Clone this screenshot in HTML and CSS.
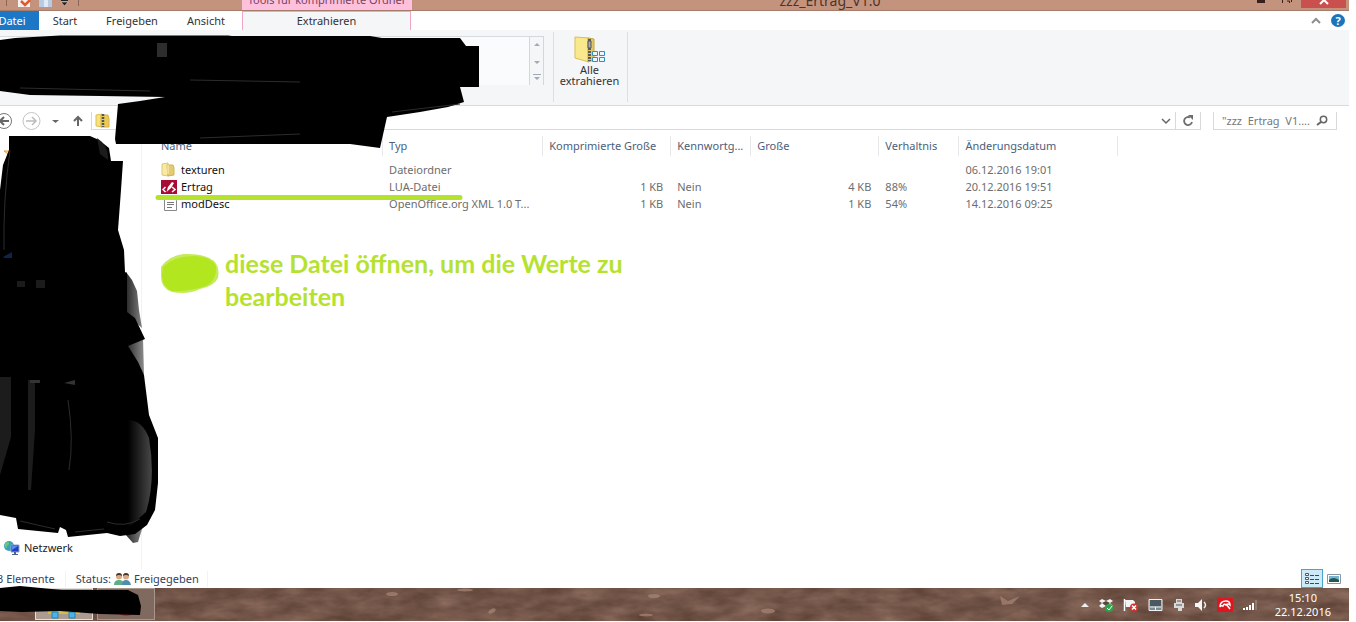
FILE: index.html
```html
<!DOCTYPE html>
<html lang="de">
<head>
<meta charset="utf-8">
<title>zzz_Ertrag_V1.0</title>
<link rel="stylesheet" href="styles.css">
</head>
<body>
<header class="titlebar">
  <div class="quick">
    <svg width="82" height="8" viewBox="0 0 82 8" aria-hidden="true">
      <path d="M6.500 0v6M78.500 0v6" stroke="#8c6656"/>
      <path d="M18 0h12v7H18z" fill="#f6f1ee"/><path d="M21 1l4 4 5-5" stroke="#e0592f" stroke-width="2.500" fill="none"/>
      <path d="M39 0h13v7H39z" fill="#b9cbe3"/><path d="M44 0h4v7h-4z" fill="#dfeaf7"/>
      <path d="M61 0h7v1h-7z" fill="#222"/><path d="M61 2h7l-3.500 4z" fill="#222" stroke="#f0dcd2" stroke-width=".5"/>
    </svg>
  </div>
  <div class="context-title"><span>Tools für komprimierte Ordner</span></div>
  <h1 class="window-title">zzz_Ertrag_V1.0</h1>
  <div class="window-buttons">
    <button class="win" aria-label="Minimieren"><svg width="10" height="8"><path d="M1 0h8v3H1z" fill="#33211a"/></svg></button>
    <button class="win" aria-label="Wiederherstellen"><svg width="12" height="8"><path d="M1.500 3V0M8.500 3V1H6M10.500 2V0" stroke="#33211a" fill="none"/></svg></button>
    <button class="win close" aria-label="Schließen"><svg width="10" height="8"><path d="M1 4l4-4 4 4" stroke="#fff" stroke-width="2" fill="none"/></svg></button>
  </div>
</header>

<nav class="tabs">
  <button class="tab file">Datei</button>
  <button class="tab start">Start</button>
  <button class="tab share">Freigeben</button>
  <button class="tab view">Ansicht</button>
  <button class="tab active">Extrahieren</button>
  <div class="tab-tools">
    <svg width="10" height="8" aria-hidden="true"><path d="M1 6l4-4 4 4" stroke="#8d8d8d" stroke-width="2" fill="none"/></svg>
    <button class="help" aria-label="Hilfe">?</button>
  </div>
</nav>

<section class="ribbon">
  <div class="group gallery-group">
    <div class="gallery"></div>
    <div class="gallery-scroll">
      <svg width="14" height="48" viewBox="0 0 14 48" fill="#a3a9b5" aria-hidden="true"><path d="M4 9h6L7 6zM4 24h6l-3 3zM3 37h8v1H3zM4 40h6l-3 3z"/></svg>
    </div>
  </div>
  <button class="group extract">
    <svg width="32" height="28" viewBox="0 0 32 28" aria-hidden="true">
      <path d="M1 1l14 1v24L1 22z" fill="#fae88d" stroke="#d9bd55"/>
      <path d="M14 2l6 1v21l-6 2z" fill="#e3c868" stroke="#c6a741"/>
      <path d="M15.500 3v22" stroke="#5c5c55" stroke-width="3" stroke-dasharray="2 1"/>
      <path d="M14 5h3v7h-3z" fill="#aaa" stroke="#555"/>
      <path d="M18.500 15.500h5v4h-5zM25.500 15.500h5v4h-5zM18.500 21.500h5v4h-5zM25.500 21.500h5v4h-5z" fill="#eaf8fd" stroke="#2e8fc4"/>
    </svg>
    <span>Alle<br>extrahieren</span>
  </button>
</section>

<div class="addressbar">
  <div class="nav-icons">
    <svg width="91" height="18" viewBox="0 0 91 18" fill="none" aria-hidden="true">
      <circle cx="4" cy="9" r="7.500" stroke="#777"/><path d="M9 9H1M4 5L0 9l4 4" stroke="#666" stroke-width="2"/>
      <circle cx="31.500" cy="9" r="8.500" stroke="#c4c4c4"/><path d="M26 9h10M32 5l4 4-4 4" stroke="#bbb" stroke-width="1.500"/>
      <path d="M52 8h7l-3.500 3z" fill="#666"/>
      <path d="M78 14V5M74 9l4-4 4 4" stroke="#666" stroke-width="2"/>
    </svg>
  </div>
  <div class="path">
    <svg width="16" height="16" viewBox="0 0 16 16" aria-hidden="true"><path d="M1 2l6-1v13l-6-1z" fill="#f7e27b" stroke="#dcc05a"/><path d="M6 2h7l1 4v8H6z" fill="#eccb55" stroke="#d5b14a"/><path d="M8 1v13" stroke="#555" stroke-width="2.500" stroke-dasharray="2 1"/></svg>
    <svg class="chevron" width="10" height="8" aria-hidden="true"><path d="M1 2l4 4 4-4" stroke="#666" stroke-width="1.500" fill="none"/></svg>
  </div>
  <button class="refresh" aria-label="Aktualisieren"><svg width="12" height="12" viewBox="0 0 12 12"><path d="M8 2.500A4 4 0 1 0 10 7" stroke="#6d6d6d" stroke-width="1.800" fill="none"/><path d="M6 0h5v5z" fill="#6d6d6d"/></svg></button>
  <label class="search">
    <input type="text" aria-label="Suchen" placeholder="&quot;zzz  Ertrag  V1....">
    <svg width="12" height="12" viewBox="0 0 12 12" aria-hidden="true"><circle cx="7.500" cy="4.500" r="3.200" stroke="#666" stroke-width="1.500" fill="none"/><path d="M5 7l-4 3" stroke="#666" stroke-width="2"/></svg>
  </label>
</div>

<div class="content">
  <aside class="sidebar">
    <svg class="star" width="16" height="16" viewBox="0 0 16 16" aria-hidden="true"><path d="M8 1l2 5h5l-4 3 2 6-5-4-5 4 2-6-4-3h5z" fill="#fde2a5" stroke="#e99c3c"/></svg>
    <a class="network" href="#">
      <svg width="17" height="14" viewBox="0 0 17 14" aria-hidden="true"><circle cx="6" cy="5" r="5" fill="#3ba0c4"/><path d="M2 3c2-3 5-2 4 0s-3 1-2 4c-2 0-3-2-2-4z" fill="#6ccb62"/><path d="M8 4h8v7H8z" fill="#1d3fc0" stroke="#8fa4c8"/><path d="M9 5l6 0-6 4z" fill="#5b8bf0"/><path d="M11 11h2v2h2v1H9v-1h2z" fill="#52628a"/></svg>
      Netzwerk
    </a>
  </aside>
  <main class="files">
    <table>
      <colgroup><col class="c-name"><col class="c-type"><col class="c-wide"><col class="c-slim"><col class="c-wide"><col class="c-slim"><col class="c-date"></colgroup>
      <thead>
        <tr><th><span>Name</span></th><th><span>Typ</span></th><th><span>Komprimierte Große</span></th><th><span>Kennwortg...</span></th><th><span>Große</span></th><th><span>Verhaltnis</span></th><th><span>Änderungsdatum</span></th></tr>
      </thead>
      <tbody>
        <tr><td class="name"><div>
          <svg width="16" height="15" viewBox="0 0 16 15" aria-hidden="true"><path d="M1 2l6-1v13l-6-1z" fill="#f9eaa0" stroke="#dcc77a"/><path d="M6 3h6l1 3v7l-6 1z" fill="#e5cb70" stroke="#cdb35c"/><path d="M7 3v9" stroke="#fff6cf"/></svg>
          texturen</div></td><td>Dateiordner</td><td></td><td></td><td></td><td></td><td>06.12.2016 19:01</td></tr>
        <tr><td class="name"><div>
          <svg width="16" height="14" viewBox="0 0 16 14" aria-hidden="true"><path d="M0 0h16v14H0z" fill="#a80c34"/><path d="M4.500 7L2 9.500 4.500 12M11 7l3 2.500L11 12" stroke="#fff" stroke-width="1.500" fill="none"/><path d="M5.500 12L7 7l4-5 2 1-3 5z" fill="#fff"/></svg>
          Ertrag</div></td><td>LUA-Datei</td><td class="num">1 KB</td><td>Nein</td><td class="num">4 KB</td><td>88%</td><td>20.12.2016 19:51</td></tr>
        <tr><td class="name"><div>
          <svg width="16" height="14" viewBox="0 0 16 14" aria-hidden="true"><path d="M3.500.5h9l3 3v10h-12z" fill="#fff" stroke="#888"/><path d="M6 5.500h7M6 7.500h7M6 10.500h5" stroke="#777"/></svg>
          modDesc</div></td><td>OpenOffice.org XML 1.0 T...</td><td class="num">1 KB</td><td>Nein</td><td class="num">1 KB</td><td>54%</td><td>14.12.2016 09:25</td></tr>
      </tbody>
    </table>
    <div class="note">
      <svg width="60" height="42" viewBox="0 0 60 42" aria-hidden="true">
        <path d="M1 14Q8 3 24 1Q44 0 54 8Q60 14 58 25Q54 33 40 36Q28 42 12 39Q1 35 1 24z" fill="#c5ea5c"/>
        <path d="M3 14Q14 3 34 3Q50 3 56 13Q57 27 46 33Q28 39 12 38Q2 34 2 22z" fill="#b2e61f"/>
      </svg>
      <p>diese Datei öffnen, um die Werte zu bearbeiten</p>
    </div>
  </main>
</div>

<footer class="status">
  <span class="count">3 Elemente</span>
  <span class="state">Status:
    <svg width="17" height="12" viewBox="0 0 17 12" aria-hidden="true"><circle cx="5" cy="3.500" r="3" fill="#d9aa83"/><path d="M2 3q0-3 3-3t3 3q-3-2-6 0z" fill="#4a3525"/><path d="M0 12q0-5 5-5t5 5z" fill="#5fae8a"/><circle cx="12" cy="3.500" r="3" fill="#d9aa83"/><path d="M9 3q0-3 3-3t3 3q-3-2-6 0z" fill="#4a3525"/><path d="M8 12q0-5 4-5t5 5z" fill="#4f8fae"/></svg>
    Freigegeben</span>
  <div class="views">
    <button class="view-btn on" aria-label="Details"><svg width="16" height="12" viewBox="0 0 16 12"><path d="M1.500.5h3v2h-3zM1.500 4.500h3v2h-3zM1.500 8.500h3v2h-3z" fill="#fff" stroke="#556"/><path d="M6 2.500h4M11 2.500h4M6 6.500h4M11 6.500h4M6 10.500h4M11 10.500h4" stroke="#445"/></svg></button>
    <button class="view-btn" aria-label="Große Symbole"><svg width="14" height="10" viewBox="0 0 14 10"><path d="M.5.5h13v9H.5z" fill="#fff" stroke="#8a98a5"/><path d="M2 2h10v6H2z" fill="#75b6d6"/><path d="M2 6q4-4 10 0v2H2z" fill="#26564f"/></svg></button>
  </div>
</footer>

<div class="taskbar">
  <svg class="ground" aria-hidden="true">
    <filter id="grain" x="0" y="0" width="100%" height="100%" color-interpolation-filters="sRGB">
      <feTurbulence type="fractalNoise" baseFrequency=".03 .08" numOctaves="4" seed="8"/>
      <feColorMatrix values=".24 0 0 0 .33  .22 0 0 0 .225  .21 0 0 0 .18  0 0 0 0 1"/>
    </filter>
    <rect width="100%" height="100%" filter="url(#grain)"/>
    <g fill="#a58373" opacity=".75"><ellipse cx="392" cy="6" rx="6" ry="2"/><ellipse cx="654" cy="8" rx="6" ry="2"/><ellipse cx="768" cy="23" rx="7" ry="2.500"/><ellipse cx="646" cy="27" rx="7" ry="1.500"/><ellipse cx="492" cy="23" rx="4" ry="2" transform="rotate(-30 492 23)"/><path d="M1000 8l8 5 12-5-8 8-10 1z"/><ellipse cx="465" cy="2" rx="8" ry="1.500"/></g>
  </svg>
  <div class="tasks"><button class="task focus" aria-label="Explorer"><svg width="32" height="9"><path d="M0 0h32v4H0z" fill="#d8b943"/><path d="M4 2h6v6H4zM21 2h6v6h-6z" fill="#4bb4e4" stroke="#2583b4"/></svg></button><button class="task" aria-label="Programm"><svg width="20" height="9"><ellipse cx="10" cy="1" rx="9" ry="5" fill="#b32b25"/></svg></button></div>
  <div class="tray">
    <svg width="8" height="14" viewBox="0 0 8 14"><path d="M0 9h8L4 5z" fill="#eee"/></svg>
    <svg width="16" height="14" viewBox="0 0 16 14"><path d="M1 3l3-2 4 2 4-2 3 2-3 2 3 3-3 2-4-2-4 2-3-2 3-3z" fill="#f2f2f2"/><path d="M4 5l4-2 4 2-4 3z" fill="#5c443a"/><circle cx="11" cy="10" r="4" fill="#2ea34a"/><path d="M9 10l2 2 3-4" stroke="#fff" fill="none"/></svg>
    <svg width="16" height="14" viewBox="0 0 16 14"><path d="M1.500 1v12" stroke="#fff" stroke-width="1.500"/><path d="M2 2h8l2 2v5H3z" fill="#f4f4f4"/><circle cx="11" cy="9.500" r="4" fill="#d3342e"/><path d="M9 7.500l4 4M13 7.500l-4 4" stroke="#fff" stroke-width="1.500"/></svg>
    <svg width="16" height="14" viewBox="0 0 16 14"><path d="M1 1.500h13v11H1z" fill="#7d8a92" stroke="#f0f0f0"/><path d="M2 9h11M7.500 9v3" stroke="#f0f0f0"/><path d="M2 2h11v6H2z" fill="#4b5961"/></svg>
    <svg width="12" height="14" viewBox="0 0 12 14"><path d="M3 1h6v4H3zM1 5h10v5H9v3H5v-3H1z" fill="#d9d9d9"/><path d="M4 3h4M3 7h6" stroke="#555"/></svg>
    <svg width="14" height="14" viewBox="0 0 14 14"><path d="M1 5h3l4-4v12L4 9H1z" fill="#f5f5f5"/><path d="M10 4q3 3 0 6" stroke="#eee" stroke-width="1.500" fill="none"/></svg>
    <svg width="16" height="14" viewBox="0 0 16 14"><path d="M0 0h16v14H0z" fill="#dd1620"/><path d="M3 9Q3 3 9 3q4 0 4 4-2-2-4 0-2-2-3 1-2-1-3 1zM9 6l4 5" fill="none" stroke="#fff" stroke-width="1.500"/></svg>
    <svg width="16" height="14" viewBox="0 0 16 14"><path d="M1 10h2v2H1zM4 9h2v3H4zM7 7h2v5H7zM10 5h2v7h-2z" fill="#fff"/><path d="M14 2v10" stroke="#a99a92"/></svg>
    <time class="clock">15:10<br>22.12.2016</time>
  </div>
</div>

<svg class="ink" width="700" height="622" viewBox="0 0 700 622" aria-hidden="true">
  <defs>
    <linearGradient id="fade"><stop offset="0" stop-color="#222"/><stop offset="1" stop-color="#8c8c8c"/></linearGradient>
    <linearGradient id="sheen"><stop offset="0" stop-color="#000"/><stop offset="1" stop-color="#484848"/></linearGradient>
  </defs>
  <path d="M126 272L132 280 137 291 139 310 142 328 126 314zM128 345L143 338 144 375 126 355zM125 534L143 526 138 542 133 543z" fill="url(#fade)"/>
  <path d="M0 40L15 38 60 35.500H228L232 36H370L382 38H460L466 46H479V87H460L464 102 448 107 420 112 387 117 380 148 350 144H116L115 139 118 104 140 101 165 97 100 96 30 95 0 91z"/>
  <path d="M9 136L90 136 99 140 109 148 111 161H123L121 190 118 230 124 250 125 272 127 273V312L135 318 145 339 128 346 138 362 144 375 149 415 158 438V483L155 510 147 525 135 534 120 536 107 533 68 537 66 530 60 527 58 533 18 529 16 518 0 515V190L3 165 9 150z"/>
  <path d="M0 588L20 586 62 590 128 590 138 595 141 606 140 615 100 614 60 611 22 612 0 611z"/>
  <path d="M128 420Q142 420 149 438 156 480 146 512L128 528z" fill="url(#sheen)"/>
  <path d="M0 377h11v60L0 475zM28 380h7v50l-4 60h-3zM97 138q12 8 11 22l-8-6z" fill="#1c1c1c"/>
  <path d="M30 380h10v3H30zM64 383l11-3v5z" fill="#333"/>
  <g fill="none" stroke="#2c2c2c">
    <path d="M68 400Q74 440 69 470M10 150Q3 200 4 250"/>
    <path d="M107 522Q125 528 140 519M75 532L104 529M20 521L55 529"/>
    <path d="M20 88L150 91M190 80L300 82M200 138L300 134M392 112L460 104"/>
  </g>
  <path d="M157 43h10v14h-10z" fill="#2d2d2d"/>
  <path d="M3 257L12 252V258H4z" fill="#102348"/><path d="M36 280h9v8H36zM17 281h8v6h-8z" fill="#1b1b1b"/>
  <path d="M158 197.500H460" stroke="#b5e22f" stroke-width="5" stroke-linecap="round"/>
</svg>
</body>
</html>
```

FILE: styles.css
```css
* { box-sizing: border-box; }
body {
  margin: 0;
  padding: 0 7px 1px 0;
  height: 100vh;
  display: flex;
  flex-direction: column;
  position: relative;
  overflow: hidden;
  background: #fff;
  color: #222;
  font: 11px/16px "Noto Sans", "Open Sans", sans-serif;
}
button { font: inherit; color: inherit; border: 0; padding: 0; background: none; }
svg { display: block; flex: none; }

.titlebar {
  flex: 0 0 11px;
  display: flex;
  align-items: flex-start;
  background: #c4937e;
  border-bottom: 1px solid #a37c6b;
  overflow: hidden;
}
.quick { flex: 0 0 242px; }
.context-title {
  flex: 0 0 170px;
  height: 11px;
  background: #ffc0dd;
  color: #74455c;
  display: flex;
  align-items: flex-end;
  justify-content: center;
  padding-bottom: 3px;
  white-space: nowrap;
}
.window-title {
  flex: 1;
  height: 11px;
  margin: 0;
  display: flex;
  align-items: flex-end;
  justify-content: center;
  color: #4a332a;
  font-weight: 400;
  font-size: 14px;
  line-height: 20px;
}
.window-buttons { display: flex; }
.win { width: 26px; height: 8px; display: flex; justify-content: center; }
.close { width: 45px; margin: 0 3px 0 1px; background: #c9504f; }

.tabs { flex: 0 0 19px; display: flex; background: #fff; color: #333; }
.tab { flex: none; display: flex; align-items: center; justify-content: center; }
.file { width: 39px; padding-right: 15px; background: #1c78c6; color: #fff; }
.start { width: 52px; }
.share { width: 82px; }
.view { width: 66px; }
.active { width: 169px; margin-left: 3px; background: #f5f6f8; border: solid #f0a5c6; border-width: 1px 1px 0; }
.tab-tools { margin-left: auto; padding-right: 4px; display: flex; align-items: center; gap: 10px; }
.help { width: 14px; height: 13px; border-radius: 50%; background: #1b75bb; color: #fff; font-weight: 700; line-height: 13px; }

.ribbon {
  flex: 0 0 76px;
  display: flex;
  background: #f5f6f8;
  border-bottom: 1px solid #d9dadc;
  padding: 2px 0 3px;
}
.group { border-right: 1px solid #dddfe2; }
.gallery-group { flex: 0 0 554px; display: flex; padding: 4px 9px 17px 0; }
.gallery { flex: 1; background: #fafbfd; border-top: 1px solid #d8dbe0; }
.gallery-scroll { width: 15px; border: solid #d3d6dc; border-width: 1px 1px 0; }
.extract { flex: 0 0 74px; display: flex; flex-direction: column; align-items: center; padding: 4px 2px 0 0; line-height: 11px; color: #333; }

.addressbar { flex: 0 0 24px; display: flex; align-items: flex-end; }
.nav-icons { flex: 0 0 91px; }
.path {
  flex: 1;
  height: 18px;
  display: flex;
  align-items: center;
  justify-content: space-between;
  padding: 0 4px 0 3px;
  border: solid #d9d9d9;
  border-width: 0 1px 1px;
}
.refresh { width: 25px; height: 18px; display: flex; align-items: center; justify-content: center; border: solid #d9d9d9; border-width: 0 1px 1px 0; }
.search { flex: 0 0 124px; min-width: 0; height: 18px; margin: 0 12px; display: flex; align-items: center; padding: 0 8px; border: solid #d9d9d9; border-width: 0 1px 1px; }
.search input { flex: 1; width: 0; min-width: 0; padding: 0; border: 0; outline: 0; background: none; font: inherit; color: #777; }
.search input::placeholder { color: #777; opacity: 1; white-space: pre; }

.content { flex: 1; min-height: 0; display: flex; }
.sidebar { flex: 0 0 142px; display: flex; flex-direction: column; justify-content: space-between; padding: 15px 0 13px 3px; border-right: 1px solid #f2f2f2; }
.network { display: flex; align-items: center; gap: 4px; color: #222; text-decoration: none; }
.files { flex: 1; min-width: 0; padding: 6px 0 0 12px; }

table { table-layout: fixed; width: 965px; border-collapse: collapse; border-right: 1px solid transparent; }
.c-name { width: 228px; }
.c-type, .c-date { width: 160px; }
.c-wide { width: 128px; }
.c-slim { width: 80px; }
th { padding: 0 0 5px; font-weight: 400; text-align: left; color: #4c607a; white-space: nowrap; }
th span { display: block; height: 20px; padding-left: 6px; line-height: 20px; border-left: 1px solid #e6e8ec; }
th:first-child span { border-color: transparent; }
th:last-child span { border-right: 1px solid #e6e8ec; }
td { height: 17px; padding: 0 7px; line-height: 17px; color: #6d6d6d; white-space: nowrap; }
.name { color: #111; }
.name div { display: flex; align-items: center; gap: 4px; }
.num { text-align: right; }

.note { display: flex; align-items: flex-start; gap: 5px; margin-top: 35px; padding-left: 6px; }
.note svg { margin-top: 6px; }
.note p { margin: 0; max-width: 430px; font: 700 25px/33px Lato, sans-serif; color: #b5e22f; }

.status { flex: 0 0 19px; display: flex; align-items: center; color: #33425c; }
.count { margin-left: -3px; padding-right: 10px; border-right: 1px solid #f2f2f2; }
.state { display: flex; align-items: center; gap: 3px; padding: 0 8px 0 10px; border-right: 1px solid #f2f2f2; }
.views { margin-left: auto; padding-right: 4px; display: flex; }
.view-btn { width: 22px; height: 19px; display: flex; align-items: center; justify-content: center; }
.on { background: #cdeaf8; border: 1px solid #4aa3cc; }

.taskbar { flex: 0 0 33px; display: flex; justify-content: space-between; position: relative; background: #715447; }
.ground { position: absolute; inset: 0; width: 100%; height: 100%; }
.tasks { position: relative; display: flex; gap: 4px; padding: 0 0 1px 35px; }
.task { width: 58px; display: flex; align-items: flex-end; justify-content: center; background: #806a5f; border: 1px solid #a8958b; }
.focus { background: #ab9b90; border-color: #e6deda; }
.tray { position: relative; display: flex; align-items: center; gap: 9px; padding-right: 18px; }
.clock { margin-left: 8px; text-align: center; color: #fff; line-height: 14px; }

.ink { position: absolute; top: 0; left: 0; pointer-events: none; }
```
